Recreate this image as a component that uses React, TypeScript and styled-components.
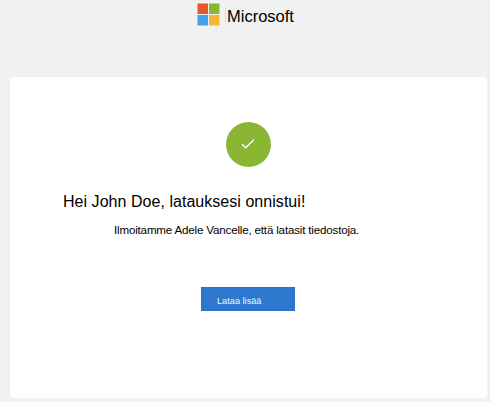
import React from "react";
import styled, { createGlobalStyle } from "styled-components";

const GlobalStyle = createGlobalStyle`
  * {
    box-sizing: border-box;
  }

  body {
    margin: 0;
    background: #f1f1f1;
    color: #000;
    font-family: "Liberation Sans", Arial, sans-serif;
  }
`;

const Page = styled.div`
  display: flex;
  flex-direction: column;
  height: 402px;
  padding: 3px 3px 4.5px 9.5px;
`;

const Header = styled.header`
  display: flex;
  align-items: flex-start;
  height: 73.5px;
  padding-left: 187.5px;
`;

const Logo = styled.svg`
  flex: none;
  width: 23px;
  height: 23px;
`;

const BrandName = styled.span`
  height: 15px;
  margin: 5px 0 0 5px;
  padding-left: 1px;
  border-left: 1px solid #dcdcdc;
  font-size: 16.5px;
  line-height: 17px;
  white-space: nowrap;
`;

const Card = styled.main`
  flex: 1;
  display: flex;
  flex-direction: column;
  align-items: flex-start;
  padding-top: 45px;
  border-radius: 4px;
  background: #fff;
`;

const Badge = styled.div`
  display: flex;
  align-items: center;
  justify-content: center;
  width: 45px;
  height: 45px;
  margin-left: 216px;
  border-radius: 50%;
  background: #8ab733;
`;

const Title = styled.h1`
  margin: 25.5px 0 0 53.5px;
  font-size: 16px;
  font-weight: 400;
  line-height: 20px;
  letter-spacing: 0.04px;
  white-space: nowrap;
`;

const Message = styled.p`
  margin: 11px 0 0 104.5px;
  font-size: 11.6px;
  line-height: 14px;
  letter-spacing: -0.18px;
  white-space: nowrap;
`;

const UploadButton = styled.button`
  width: 94px;
  height: 24px;
  margin: 50px 0 0 191.5px;
  padding: 3px 0 0 15px;
  border: 1px solid #2b74c7;
  background: #2d79d0;
  color: #f2f7fd;
  font-family: inherit;
  font-size: 9.2px;
  line-height: 12px;
  text-align: left;
`;

const App: React.FC = () => {
  return (
    <>
      <GlobalStyle />
      <Page>
        <Header>
          <Logo viewBox="0 0 23 23">
            <rect x="0.5" y="0.5" width="10.5" height="10.5" fill="#e5572f" />
            <rect x="12" y="0.5" width="10.5" height="10.5" fill="#8ab733" />
            <rect x="0.5" y="12" width="10.5" height="10.5" fill="#41a0e8" />
            <rect x="12" y="12" width="10.5" height="10.5" fill="#f5b53b" />
          </Logo>
          <BrandName>Microsoft</BrandName>
        </Header>
        <Card>
          <Badge>
            <svg width="14" height="10" viewBox="0 0 14 10" fill="none">
              <path d="M1 5.2 L4.7 8.8 L12.8 0.8" stroke="#fff" strokeWidth="1.3" />
            </svg>
          </Badge>
          <Title>Hei John Doe, latauksesi onnistui!</Title>
          <Message>Ilmoitamme Adele Vancelle, että latasit tiedostoja.</Message>
          <UploadButton type="button">Lataa lisää</UploadButton>
        </Card>
      </Page>
    </>
  );
};

export default App;
